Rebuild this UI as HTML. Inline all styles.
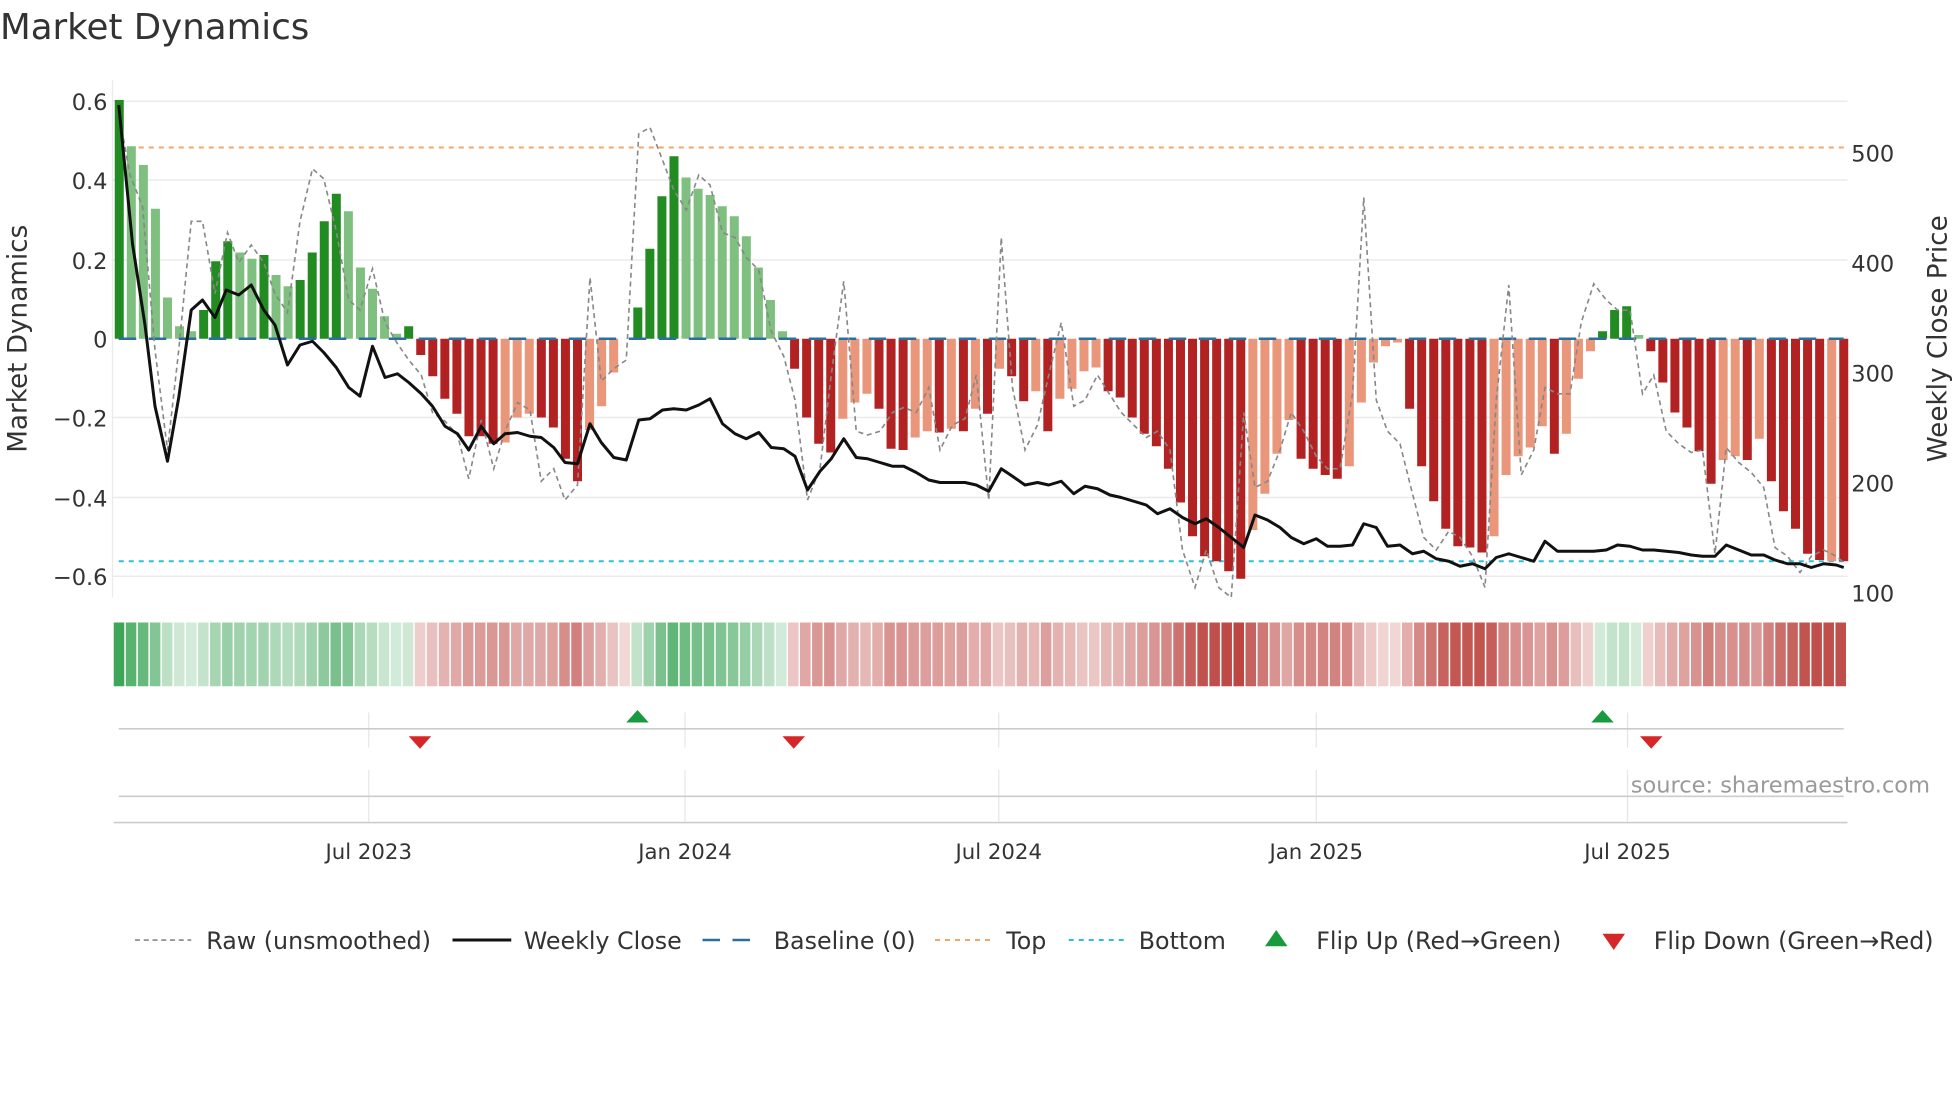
<!DOCTYPE html>
<html><head><meta charset="utf-8"><style>
html,body{margin:0;padding:0;background:#fff;width:1960px;height:1102px;overflow:hidden}
svg{display:block}
text{font-family:"DejaVu Sans","Liberation Sans",sans-serif;fill:#333}
</style></head><body>
<svg id="s" width="1960" height="1102" viewBox="0 0 1568 881.6" xmlns="http://www.w3.org/2000/svg">
<text x="0" y="31" font-size="28.5">Market Dynamics</text>
<g stroke="#ebebef" stroke-width="1.2">
<line x1="90" y1="81" x2="1478" y2="81"/><line x1="90" y1="144" x2="1478" y2="144"/>
<line x1="90" y1="208" x2="1478" y2="208"/><line x1="90" y1="334" x2="1478" y2="334"/>
<line x1="90" y1="398" x2="1478" y2="398"/><line x1="90" y1="461" x2="1478" y2="461"/>
</g>
<line x1="90" y1="64" x2="90" y2="478" stroke="#ebebef"/>
<g font-size="18" text-anchor="end">
<text x="86" y="88">0.6</text><text x="86" y="151">0.4</text><text x="86" y="215">0.2</text>
<text x="86" y="278">0</text><text x="86" y="341">−0.2</text><text x="86" y="405">−0.4</text><text x="86" y="468">−0.6</text>
</g>
<g font-size="18">
<text x="1481" y="129">500</text><text x="1481" y="217">400</text><text x="1481" y="305">300</text>
<text x="1481" y="393">200</text><text x="1481" y="481">100</text>
</g>
<text transform="translate(21,271) rotate(-90)" font-size="21" text-anchor="middle">Market Dynamics</text>
<text transform="translate(1557,271) rotate(-90)" font-size="21" text-anchor="middle">Weekly Close Price</text>
<line x1="95" y1="118" x2="1475" y2="118" stroke="#f0a868" stroke-width="1.6" stroke-dasharray="4,4"/>
<line x1="95" y1="449" x2="1475" y2="449" stroke="#2bc0d8" stroke-width="1.6" stroke-dasharray="4,4"/>
<g id="bars"></g>
<line x1="95" y1="271" x2="1475" y2="271" stroke="#2c6e9e" stroke-width="2" stroke-dasharray="14,10"/>
<polyline id="raw" fill="none" stroke="#888" stroke-width="1.3" stroke-dasharray="4,3"/>
<polyline id="close" fill="none" stroke="#111" stroke-width="2.4" stroke-linejoin="round"/>
<g id="heat"></g>
<g stroke="#e6e6e6" stroke-width="1">
<line x1="295" y1="570" x2="295" y2="598"/><line x1="548" y1="570" x2="548" y2="598"/>
<line x1="799" y1="570" x2="799" y2="598"/><line x1="1053" y1="570" x2="1053" y2="598"/><line x1="1302" y1="570" x2="1302" y2="598"/>
<line x1="295" y1="616" x2="295" y2="658"/><line x1="548" y1="616" x2="548" y2="658"/>
<line x1="799" y1="616" x2="799" y2="658"/><line x1="1053" y1="616" x2="1053" y2="658"/><line x1="1302" y1="616" x2="1302" y2="658"/>
</g>
<line x1="95" y1="583" x2="1475" y2="583" stroke="#ccc" stroke-width="1.3"/>
<line x1="95" y1="637" x2="1475" y2="637" stroke="#ccc" stroke-width="1.3"/>
<line x1="91" y1="658" x2="1478" y2="658" stroke="#ccc" stroke-width="1.3"/>
<g fill="#1a9a3e"><polygon points="510,568 501,578 519,578"/><polygon points="1282,568 1273,578 1291,578"/></g>
<g fill="#d62728"><polygon points="327,589 345,589 336,599"/><polygon points="626,589 644,589 635,599"/><polygon points="1312,589 1330,589 1321,599"/></g>
<text x="1544" y="634" font-size="18" style="fill:#9a9a9a" text-anchor="end">source: sharemaestro.com</text>
<g font-size="17" text-anchor="middle">
<text x="295" y="687">Jul 2023</text><text x="548" y="687">Jan 2024</text><text x="799" y="687">Jul 2024</text>
<text x="1053" y="687">Jan 2025</text><text x="1302" y="687">Jul 2025</text>
</g>
<g font-size="19">
<line x1="108" y1="752" x2="153" y2="752" stroke="#888" stroke-width="1.3" stroke-dasharray="4,3"/>
<text x="165" y="759">Raw (unsmoothed)</text>
<line x1="362" y1="752" x2="409" y2="752" stroke="#111" stroke-width="2.4"/>
<text x="419" y="759">Weekly Close</text>
<line x1="562" y1="752" x2="608" y2="752" stroke="#2c6e9e" stroke-width="2" stroke-dasharray="14,10"/>
<text x="619" y="759">Baseline (0)</text>
<line x1="748" y1="752" x2="794" y2="752" stroke="#f0a868" stroke-width="1.6" stroke-dasharray="4,4"/>
<text x="805" y="759">Top</text>
<line x1="855" y1="752" x2="901" y2="752" stroke="#2bc0d8" stroke-width="1.6" stroke-dasharray="4,4"/>
<text x="911" y="759">Bottom</text>
<polygon points="1021,744 1012,757 1030,757" fill="#1a9a3e"/>
<text x="1053" y="759">Flip Up (Red→Green)</text>
<polygon points="1282,747 1300,747 1291,760" fill="#d62728"/>
<text x="1323" y="759">Flip Down (Green→Red)</text>
</g>
</svg>
<script>
var d="G80 g117 g132 g167 g238 g261 g265 G248 G209 G193 g202 g207 G204 g220 g229 G224 G202 G177 G155 g169 g214 g231 g253 g267 G261 R284 R301 R319 R331 R349 R349 R355 r354 r334 r331 R334 R342 R367 R385 r344 r325 r298 r271 G246 G199 G157 G125 g142 g151 g156 g165 g173 g189 g214 g240 g265 R295 R334 R355 R362 r335 r322 r315 R327 R359 R360 r350 r345 R346 r343 R345 r327 R331 r295 R301 R321 r313 R345 r319 r311 r297 r294 R313 R318 R334 R347 R357 R375 R402 R429 R445 R449 R457 R463 r424 r395 r363 r336 R367 R375 R380 R383 r373 r322 r290 r277 r274 R327 R373 R401 R423 R437 R438 R442 r429 r380 r365 r358 r341 R363 r347 r303 r281 G265 G248 G245 g268 R281 R306 R330 R342 R361 R387 r368 r365 R368 r351 R385 R409 R423 R443 R448 r449 R449".split(" ");
var col={G:"#228b22",g:"#7fbf7f",R:"#b22222",r:"#e9967a"};
var n=d.length,step=(1475-95.4)/(n-1),b="",h="";
var hw=(1478-91)/n;
for(var i=0;i<n;i++){var c=d[i][0],y=+d[i].slice(1),x=95.4+step*i;
var y0=Math.min(y,271),y1=Math.max(y,271);
if(y1-y0>0.5)b+='<rect x="'+(x-3.6)+'" y="'+y0+'" width="7.2" height="'+(y1-y0)+'" fill="'+col[c]+'"/>';
var v=Math.min(1,Math.abs(271-y)/190),a=0.2+0.75*v;
var base=(c=="G"||c=="g")?"52,160,80":"185,60,55";
h+='<rect x="'+(91+hw*i)+'" y="498" width="'+(hw-1.2)+'" height="51" fill="rgba('+base+','+a.toFixed(2)+')"/>';}
document.getElementById("bars").innerHTML=b;document.getElementById("heat").innerHTML=h;
document.getElementById("close").setAttribute("points","95,84 106,195 116,260 124,325 134,369 143,318 153,248 162,240 172,254 181,232 191,236 201,228 211,248 220,260 230,292 240,276 250,273 259,282 269,294 279,310 288,317 298,277 308,302 318,299 327,306 337,315 346,325 356,341 366,347 375,360 385,341 395,355 404,347 414,346 424,349 433,350 443,358 452,370 462,371 472,339 481,354 491,366 501,368 511,336 520,335 530,328 539,327 549,328 559,324 568,319 578,339 588,347 597,351 607,346 617,358 627,359 636,365 646,392 656,377 665,367 675,351 685,366 694,367 704,370 714,373 723,373 733,378 743,384 752,386 762,386 772,386 781,388 791,393 801,375 810,381 820,388 830,386 839,388 849,385 859,395 868,389 878,391 888,396 897,398 907,401 917,404 926,411 936,407 946,414 956,419 965,415 975,422 985,430 995,438 1004,412 1014,416 1024,422 1033,430 1043,435 1053,431 1062,437 1072,437 1082,436 1091,419 1101,422 1110,437 1120,436 1130,443 1139,441 1149,447 1159,449 1168,453 1178,451 1188,455 1197,446 1207,443 1217,446 1227,449 1236,433 1246,441 1256,441 1265,441 1275,441 1285,440 1294,436 1304,437 1314,440 1323,440 1333,441 1343,442 1353,444 1362,445 1372,445 1381,436 1391,440 1401,444 1411,444 1420,448 1430,451 1440,451 1449,454 1459,451 1469,452 1475,454");
document.getElementById("raw").setAttribute("points","95,90 104,140 114,165 124,280 134,360 143,280 153,177 162,177 172,235 182,186 191,210 201,196 211,210 220,235 230,250 240,177 250,135 259,143 269,185 279,240 288,248 298,215 308,258 318,275 327,288 337,300 346,330 356,337 366,348 375,383 385,336 395,375 404,345 414,322 424,328 433,385 443,375 452,400 462,388 472,222 481,305 491,295 501,288 511,107 520,102 530,128 539,152 549,168 559,140 568,148 578,186 588,190 597,206 607,216 617,265 627,285 636,320 646,400 656,375 665,300 675,225 685,345 694,348 704,345 714,330 723,326 733,330 743,310 752,360 762,340 772,335 781,300 791,400 801,190 810,310 820,360 830,340 839,300 849,258 859,325 868,320 878,300 888,316 897,330 907,340 917,350 926,345 936,360 946,440 956,470 965,440 975,470 985,478 995,330 1004,390 1014,385 1024,360 1033,330 1043,345 1053,365 1062,375 1072,375 1082,315 1091,158 1101,320 1110,345 1120,355 1130,395 1139,430 1149,440 1159,425 1168,430 1178,445 1188,470 1197,320 1207,228 1217,380 1227,360 1236,310 1246,315 1256,315 1265,258 1275,227 1285,240 1294,248 1304,248 1314,315 1323,300 1333,345 1343,355 1353,362 1362,360 1372,443 1381,358 1391,370 1401,378 1411,390 1420,438 1430,445 1440,458 1449,445 1459,440 1469,445 1475,450");
</script>
</body></html>
